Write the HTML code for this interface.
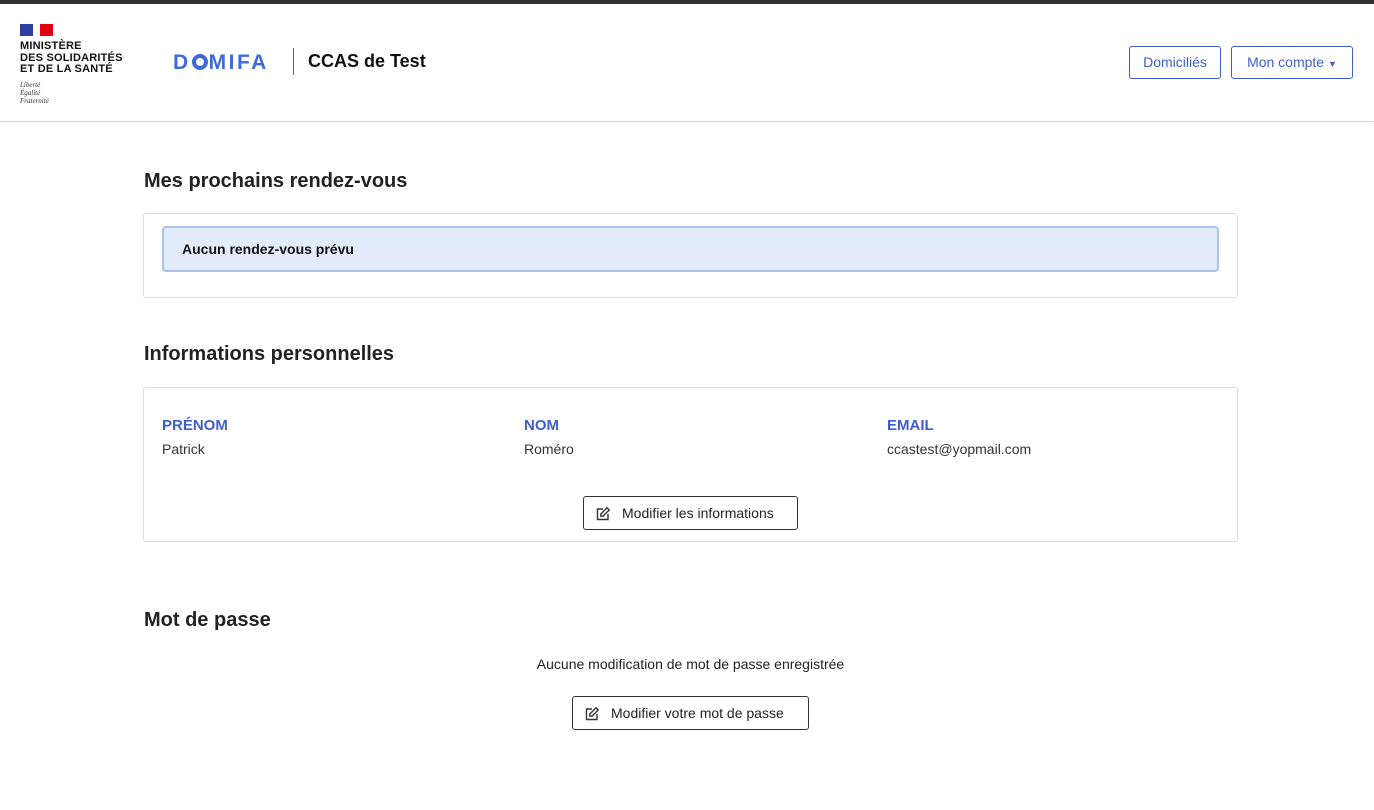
<!DOCTYPE html>
<html><head><meta charset="utf-8"><style>
*{box-sizing:border-box;margin:0;padding:0}
body{width:1374px;height:810px;background:#fff;font-family:"Liberation Sans",sans-serif;color:#212529;position:relative;overflow:hidden}
.topbar{position:absolute;top:0;left:0;width:1374px;height:4px;background:#333}
header{position:absolute;top:4px;left:0;width:1374px;height:118px;border-bottom:1px solid #ddd;box-shadow:0 1px 3px rgba(0,0,0,.06)}
.abs{position:absolute}
.min{left:20px;top:37px;font-size:11px;font-weight:bold;line-height:11.5px;color:#111;letter-spacing:.2px}
.dev{left:20px;top:77px;font-family:"Liberation Serif",serif;font-style:italic;font-size:7px;line-height:8px;color:#333}
.btn{position:absolute;border:1px solid #3f5fc8;color:#3f5fc8;border-radius:3px;font-size:14px;text-align:center;line-height:31px;height:33px}
h2{position:absolute;left:144px;font-size:20px;font-weight:bold;color:#222}
.card{position:absolute;left:143px;width:1095px;border:1px solid #ddd;border-radius:3px}
.lbl{position:absolute;font-size:15px;font-weight:bold;color:#3f5fc8}
.val{position:absolute;font-size:14px;color:#333}
.ob{position:absolute;border:1px solid #333;border-radius:3px;font-size:14px;height:34px;line-height:32px;color:#222;padding-left:38px}
.ob svg{position:absolute;left:11px;top:9px}
</style></head><body>
<div class="topbar"></div>
<header>
<div class="abs" style="left:20px;top:20px;width:13px;height:12px;background:#2d3e9f"></div>
<div class="abs" style="left:33px;top:20px;width:7px;height:12px;background:#fff"></div>
<div class="abs" style="left:40px;top:20px;width:13px;height:12px;background:#e1000f"></div>
<div class="abs min">MINISTÈRE<br>DES SOLIDARITÉS<br>ET DE LA SANTÉ</div>
<div class="abs dev">Liberté<br>Égalité<br>Fraternité</div>
<div class="abs" style="left:173px;top:47px;font-size:21px;font-weight:bold;color:#3f6ad8;letter-spacing:2.5px">D<span style="display:inline-block;width:16px;height:16px;border:4px solid #3f6ad8;border-radius:50%;vertical-align:-1px;margin:0 1px"></span>MIFA</div>
<div class="abs" style="left:293px;top:44px;width:1px;height:27px;background:#3f5fc8"></div>
<div class="abs" style="left:308px;top:47px;font-size:18px;font-weight:bold;color:#111">CCAS de Test</div>
<div class="btn" style="left:1129px;top:42px;width:92px">Domiciliés</div>
<div class="btn" style="left:1231px;top:42px;width:122px">Mon compte <span style="font-size:9px">▼</span></div>
</header>
<h2 style="top:170px">Mes prochains rendez-vous</h2>
<div class="card" style="top:213px;height:85px">
<div class="abs" style="left:18px;top:12px;width:1057px;height:46px;background:#e2ecfb;border:2px solid #a9c4ea;border-radius:4px;font-size:14px;font-weight:bold;line-height:42px;padding-left:18px;color:#111">Aucun rendez-vous prévu</div>
</div>
<h2 style="top:343px">Informations personnelles</h2>
<div class="card" style="top:387px;height:155px">
<div class="lbl" style="left:18px;top:29px">PRÉNOM</div><div class="val" style="left:18px;top:53px">Patrick</div>
<div class="lbl" style="left:380px;top:29px">NOM</div><div class="val" style="left:380px;top:53px">Roméro</div>
<div class="lbl" style="left:743px;top:29px">EMAIL</div><div class="val" style="left:743px;top:53px">ccastest@yopmail.com</div>
<div class="ob" style="left:439px;top:108px;width:215px"><svg width="16" height="16" viewBox="0 0 16 16" fill="none" stroke="#333" stroke-width="1.4"><path d="M8 3H2.5v10.5H13V8"/><path d="M12 1.8l2.2 2.2L8 10.2H5.8V8z"/></svg>Modifier les informations</div>
</div>
<h2 style="top:609px">Mot de passe</h2>
<div class="val" style="left:0;width:1381px;text-align:center;top:656px;color:#222">Aucune modification de mot de passe enregistrée</div>
<div class="ob" style="left:572px;top:696px;width:237px"><svg width="16" height="16" viewBox="0 0 16 16" fill="none" stroke="#333" stroke-width="1.4"><path d="M8 3H2.5v10.5H13V8"/><path d="M12 1.8l2.2 2.2L8 10.2H5.8V8z"/></svg>Modifier votre mot de passe</div>
</body></html>
